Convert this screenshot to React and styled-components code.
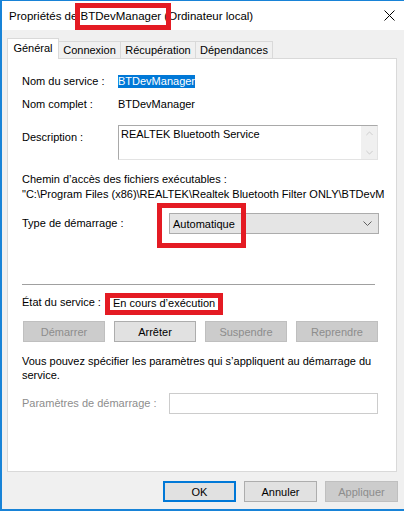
import React from 'react';
import styled, { createGlobalStyle } from 'styled-components';

const GlobalStyle = createGlobalStyle`
  html, body {
    margin: 0;
    padding: 0;
    background: #fff;
  }
  body {
    font-family: "Liberation Sans", Arial, sans-serif;
    font-size: 11px;
    color: #000;
  }
  * {
    box-sizing: border-box;
  }
`;

const Window = styled.div`
  width: 404px;
  height: 511px;
  background: #f0f0f0;
  border-top: 1px solid #1883d7;
  border-left: 2px solid #1883d7;
  border-bottom: 2px solid #1883d7;
  display: flex;
  flex-direction: column;
  overflow: hidden;
`;

const TitleBar = styled.div`
  height: 29px;
  flex-shrink: 0;
  background: #fff;
  display: flex;
  align-items: center;
  justify-content: space-between;
  padding: 0 9px 0 7px;
  font-size: 11.5px;
`;

const Title = styled.div`
  white-space: nowrap;
`;

// red frame drawn over a piece of text
const Marked = styled.span`
  position: relative;
  display: inline-block;
  line-height: 14px;
  &::after {
    content: '';
    position: absolute;
    left: ${p => p.$l}px;
    right: ${p => p.$r}px;
    top: ${p => p.$t}px;
    bottom: ${p => p.$b}px;
    border: 5px solid #e41b23;
    pointer-events: none;
    z-index: 2;
  }
`;

const TabRow = styled.div`
  height: 28px;
  flex-shrink: 0;
  display: flex;
  align-items: flex-end;
  padding-left: 5px;
  position: relative;
  z-index: 1;
`;

const Tab = styled.div`
  width: ${p => p.$w}px;
  height: ${p => (p.$active ? 21 : 17)}px;
  margin-bottom: ${p => (p.$active ? -1 : 0)}px;
  margin-left: ${p => (p.$first ? 0 : -1)}px;
  background: ${p => (p.$active ? '#fff' : '#f0f0f0')};
  border: 1px solid #d9d9d9;
  border-bottom: none;
  display: flex;
  align-items: center;
  justify-content: center;
  padding-bottom: ${p => (p.$active ? 3 : 0)}px;
`;

const Panel = styled.div`
  height: 414px;
  flex-shrink: 0;
  margin: 0 7px 0 5px;
  background: #fff;
  border: 1px solid #d9d9d9;
  padding: 15px 18px 0 14px;
  display: flex;
  flex-direction: column;
`;

const Row = styled.div`
  display: flex;
  align-items: ${p => (p.$top ? 'flex-start' : 'center')};
  margin-top: ${p => p.$mt || 0}px;
  line-height: 15px;
`;

const Label = styled.div`
  width: ${p => p.$w}px;
  flex-shrink: 0;
  padding-top: ${p => p.$pt || 0}px;
  color: ${p => (p.$disabled ? '#8d8d8d' : '#000')};
  white-space: nowrap;
`;

const Selected = styled.span`
  background: #0078d7;
  color: #fff;
  line-height: 13px;
  display: inline-block;
`;

const DescBox = styled.div`
  flex: 1;
  height: 35px;
  border: 1px solid #a9a9a9;
  border-bottom-color: #e3e3e3;
  border-right-color: #e3e3e3;
  display: flex;
`;

const DescText = styled.div`
  flex: 1;
  padding: 1px 2px;
  line-height: 14px;
`;

const ScrollTrack = styled.div`
  width: 16px;
  background: #f0f0f0;
  display: flex;
  flex-direction: column;
  justify-content: space-between;
  align-items: center;
  padding: 5px 0 4px;
`;

const Text = styled.div`
  line-height: ${p => p.$lh || 15}px;
  margin-top: ${p => p.$mt || 0}px;
  white-space: ${p => (p.$nowrap ? 'nowrap' : 'normal')};
`;

const Combo = styled.div`
  flex: 1;
  height: 21px;
  margin-right: -1px;
  background: #e5e5e5;
  border: 1px solid #acacac;
  display: flex;
  align-items: center;
  justify-content: space-between;
  padding: 0 6px 0 3px;
`;

const Separator = styled.div`
  height: 1px;
  background: #a0a0a0;
  margin: 50px 3px 0 0;
`;

const ButtonRow = styled.div`
  display: flex;
  justify-content: space-between;
  margin-top: 11px;
  padding-left: 1px;
`;

const Button = styled.div`
  width: ${p => p.$w}px;
  height: 21px;
  display: flex;
  align-items: center;
  justify-content: center;
  background: ${p => (p.$disabled ? '#cccccc' : '#e1e1e1')};
  border: ${p => (p.$default ? '2px solid #0078d7' : p.$disabled ? '1px solid #bfbfbf' : '1px solid #adadad')};
  color: ${p => (p.$disabled ? '#8d8d8d' : '#000')};
`;

const Input = styled.div`
  flex: 1;
  height: 21px;
  border: 1px solid #cccccc;
  background: #fff;
`;

const Footer = styled.div`
  flex: 1;
  display: flex;
  justify-content: flex-end;
  gap: 8px;
  padding: 9px 6px 0 0;
`;

const Chevron = ({ up, color = '#606060', w = 9 }) => (
  <svg width={w} height="5" viewBox="0 0 9 5">
    <path
      d={up ? 'M0.5 4.5 L4.5 0.5 L8.5 4.5' : 'M0.5 0.5 L4.5 4.5 L8.5 0.5'}
      fill="none"
      stroke={color}
      strokeWidth="1"
    />
  </svg>
);

const CloseIcon = () => (
  <svg width="11" height="11" viewBox="0 0 11 11">
    <path d="M0.5 0.5 L10.5 10.5 M10.5 0.5 L0.5 10.5" stroke="#000" strokeWidth="1" />
  </svg>
);

export default function App() {
  return (
    <>
      <GlobalStyle />
      <Window>
        <TitleBar>
          <Title>
            Propriétés de <Marked $l={-6} $r={-10} $t={-6} $b={-7}>BTDevManager</Marked> (Ordinateur local)
          </Title>
          <CloseIcon />
        </TitleBar>

        <TabRow>
          <Tab $w={52} $active $first>Général</Tab>
          <Tab $w={63}>Connexion</Tab>
          <Tab $w={76}>Récupération</Tab>
          <Tab $w={78}>Dépendances</Tab>
        </TabRow>

        <Panel>
          <Row>
            <Label $w={96}>Nom du service :</Label>
            <Selected>BTDevManager</Selected>
          </Row>
          <Row $mt={8}>
            <Label $w={96}>Nom complet :</Label>
            <span>BTDevManager</span>
          </Row>
          <Row $top $mt={13}>
            <Label $w={96} $pt={5}>Description :</Label>
            <DescBox>
              <DescText>REALTEK Bluetooth Service</DescText>
              <ScrollTrack>
                <Chevron up color="#c2c2c2" w={7} />
                <Chevron color="#c2c2c2" w={7} />
              </ScrollTrack>
            </DescBox>
          </Row>

          <Text $mt={12}>Chemin d’accès des fichiers exécutables :</Text>
          <Text $nowrap>"C:\Program Files (x86)\REALTEK\Realtek Bluetooth Filter ONLY\BTDevM</Text>

          <Row $mt={11}>
            <Label $w={147}>Type de démarrage :</Label>
            <Combo>
              <Marked $l={-16} $r={-11} $t={-14} $b={-17}>Automatique</Marked>
              <Chevron />
            </Combo>
          </Row>

          <Separator />

          <Row $mt={10}>
            <Label $w={91}>État du service :</Label>
            <Marked $l={-8} $r={-8} $t={-3} $b={-5}>En cours d’exécution</Marked>
          </Row>

          <ButtonRow>
            <Button $w={82} $disabled>Démarrer</Button>
            <Button $w={82}>Arrêter</Button>
            <Button $w={82} $disabled>Suspendre</Button>
            <Button $w={82} $disabled>Reprendre</Button>
          </ButtonRow>

          <Text $lh={14} $mt={12}>
            Vous pouvez spécifier les paramètres qui s’appliquent au démarrage du service.
          </Text>

          <Row $mt={11}>
            <Label $w={147} $disabled>Paramètres de démarrage :</Label>
            <Input />
          </Row>
        </Panel>

        <Footer>
          <Button $w={73} $default>OK</Button>
          <Button $w={73}>Annuler</Button>
          <Button $w={73} $disabled>Appliquer</Button>
        </Footer>
      </Window>
    </>
  );
}
